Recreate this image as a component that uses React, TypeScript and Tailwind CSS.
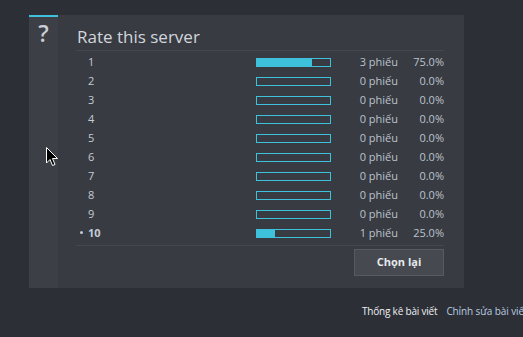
import React from "react";

const rows = [
  { n: "1", v: 3, p: "75.0%", f: 75 },
  { n: "2", v: 0, p: "0.0%", f: 0 },
  { n: "3", v: 0, p: "0.0%", f: 0 },
  { n: "4", v: 0, p: "0.0%", f: 0 },
  { n: "5", v: 0, p: "0.0%", f: 0 },
  { n: "6", v: 0, p: "0.0%", f: 0 },
  { n: "7", v: 0, p: "0.0%", f: 0 },
  { n: "8", v: 0, p: "0.0%", f: 0 },
  { n: "9", v: 0, p: "0.0%", f: 0 },
  { n: "10", v: 1, p: "25.0%", f: 25, sel: true },
];

export default function App() {
  return (
    <div
      className="relative w-[523px] h-[337px] overflow-hidden bg-[#2c2f36] pt-[15px] pl-[29px]"
      style={{ fontFamily: '"Open Sans", "Noto Sans", sans-serif' }}
    >
      <div className="flex w-[435px] h-[273px]">
        <div className="w-[30px] bg-[#3c3f46] border-t-2 border-[#3ec1db] flex justify-center">
          <span className="text-[23px] font-semibold leading-none mt-[5px] text-[#c9cdd3]">?</span>
        </div>
        <div className="flex-1 bg-[#383b42] pl-[18px] pr-[20px] flex flex-col">
          <div className="mt-[11px] h-[22px] text-[17px] leading-[22px] text-[#d2d6dc] pl-px">Rate this server</div>
          <div className="mt-[2px] border-b border-[#44474f]" />
          <div className="pt-[2px] flex flex-col">
            {rows.map((r) => (
              <div key={r.n} className="h-[19px] flex items-center text-[11px] text-[#c5ccd6]">
                <div className="w-[180px] flex items-center pl-[4px]">
                  <span className="w-[8px] flex items-center">
                    {r.sel ? <span className="w-[3px] h-[3px] rounded-full bg-[#c5ccd6] -mt-[3px]" /> : null}
                  </span>
                  <span className={r.sel ? "font-bold" : ""}>{r.n}</span>
                </div>
                <div className="w-[75px] h-[9px] border border-[#3ec1db] relative">
                  <div className="h-full bg-[#3ec1db]" style={{ width: `${r.f}%` }} />
                </div>
                <div className="w-[67px] text-right text-[#bcc3cd]">{r.v} phiếu</div>
                <div className="w-[46px] text-right text-[#bcc3cd]">{r.p}</div>
              </div>
            ))}
          </div>
          <div className="mt-[2px] border-b border-[#44474f]" />
          <div className="flex justify-end mt-[3px]">
            <button className="w-[90px] h-[27px] bg-[#464950] border border-[#575a61] text-[11px] font-bold text-[#e6e9ed]">
              Chọn lại
            </button>
          </div>
        </div>
      </div>
      <div className="mt-[16px] ml-[333px] flex gap-[9px] whitespace-nowrap text-[10px]">
        <span className="text-[#eef0f3] font-medium tracking-[-0.2px]">Thống kê bài viết</span>
        <span className="text-[#b9cde0] tracking-[-0.1px]">Chỉnh sửa bài viết</span>
      </div>
      <svg className="absolute left-[46px] top-[147px]" width="13" height="21" viewBox="0 0 13 21">
        <path d="M0.5 0.5 L0.5 16 L4 12.5 L6.5 18.5 L9 17.5 L6.5 11.5 L11.5 11.5 Z" fill="#000" stroke="#fff" strokeWidth="1" />
      </svg>
    </div>
  );
}
